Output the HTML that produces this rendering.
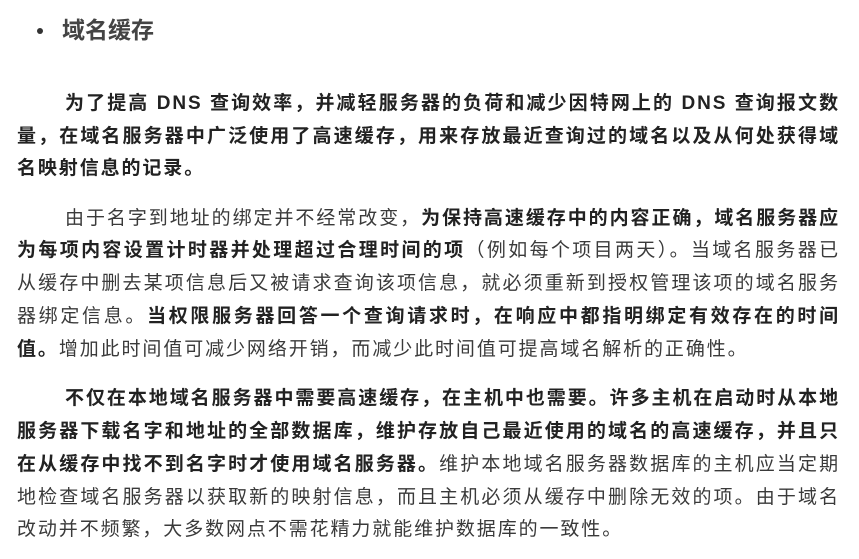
<!DOCTYPE html>
<html><head><meta charset="utf-8"><style>
body{margin:0;width:859px;height:559px;background:#fff;position:relative;overflow:hidden;font-family:"Liberation Sans","Noto Sans CJK SC",sans-serif;color:#3a3a3a}
.l{position:absolute;left:17px;width:823px;height:32px;line-height:32px;font-size:19px;letter-spacing:1.9px;white-space:nowrap;text-align:justify;text-align-last:justify}
.n{text-align:left;text-align-last:left}
b{font-weight:bold;color:#222}
.h{position:absolute;left:62px;top:14px;font-size:23px;color:#444;font-weight:bold;letter-spacing:0px;line-height:32px}
.dot{position:absolute;left:37px;top:28px;width:6px;height:6px;border-radius:50%;background:#333}
</style></head><body>
<div class="dot"></div>
<div class="h">域名缓存</div>

<div class="l" style="top:88px;left:65px;width:775px"><b>为了提高 DNS 查询效率，并减轻服务器的负荷和减少因特网上的 DNS 查询报文数</b></div>
<div class="l" style="top:121px"><b>量，在域名服务器中广泛使用了高速缓存，用来存放最近查询过的域名以及从何处获得域</b></div>
<div class="l n" style="top:153px"><b>名映射信息的记录。</b></div>

<div class="l" style="top:203px;left:65px;width:775px">由于名字到地址的绑定并不经常改变，<b>为保持高速缓存中的内容正确，域名服务器应</b></div>
<div class="l" style="top:235px"><b>为每项内容设置计时器并处理超过合理时间的项</b>（例如每个项目两天）。当域名服务器已</div>
<div class="l" style="top:268px">从缓存中删去某项信息后又被请求查询该项信息，就必须重新到授权管理该项的域名服务</div>
<div class="l" style="top:301px">器绑定信息。<b>当权限服务器回答一个查询请求时，在响应中都指明绑定有效存在的时间</b></div>
<div class="l n" style="top:334px"><b>值。</b>增加此时间值可减少网络开销，而减少此时间值可提高域名解析的正确性。</div>

<div class="l" style="top:383px;left:65px;width:775px"><b>不仅在本地域名服务器中需要高速缓存，在主机中也需要。许多主机在启动时从本地</b></div>
<div class="l" style="top:416px"><b>服务器下载名字和地址的全部数据库，维护存放自己最近使用的域名的高速缓存，并且只</b></div>
<div class="l" style="top:449px"><b>在从缓存中找不到名字时才使用域名服务器。</b>维护本地域名服务器数据库的主机应当定期</div>
<div class="l" style="top:482px">地检查域名服务器以获取新的映射信息，而且主机必须从缓存中删除无效的项。由于域名</div>
<div class="l n" style="top:514px">改动并不频繁，大多数网点不需花精力就能维护数据库的一致性。</div>
</body></html>
